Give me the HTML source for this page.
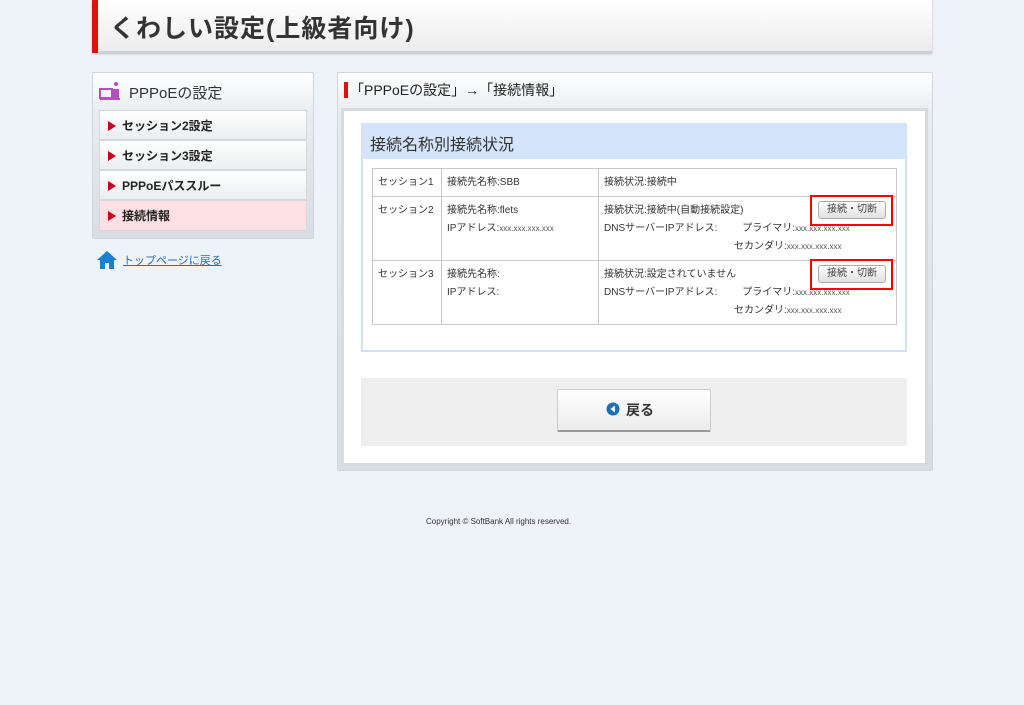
<!DOCTYPE html>
<html><head><meta charset="utf-8"><style>
*{margin:0;padding:0;box-sizing:border-box}
body{width:1024px;height:705px;background:#eef3fa;font-family:"Liberation Sans","Noto Sans CJK JP",sans-serif;color:#222;position:relative;overflow:hidden}
.a{position:absolute}
.hdr{left:92px;top:0;width:840px;height:53px;background:linear-gradient(#fff,#ececec);border-bottom:2px solid #cfd3d8;box-shadow:0 1px 2px #bbb}
.hdr:before{content:"";position:absolute;left:0;top:0;width:6px;height:53px;background:#e0100f}
.hdr span{position:absolute;left:18px;top:9px;font-size:25px;font-weight:bold;color:#333;letter-spacing:1px}
.panel{background:linear-gradient(#fff,#e9ecef 40px,#d7dde3);border:1px solid #d0d5da;border-radius:2px}
.mi{left:99px;width:208px;height:30px;background:linear-gradient(#fff,#eceeef);border:1px solid #d6d9dc;font-size:12px;font-weight:bold;padding:6px 0 0 22px}
.mi:before{content:"";position:absolute;left:8px;top:10px;border-left:8px solid #c8001a;border-top:5px solid transparent;border-bottom:5px solid transparent}
table{table-layout:fixed}
td{border:1px solid #c8c8c8;font-size:10px;vertical-align:top;padding:5px 5px 0;line-height:18px;color:#333;white-space:nowrap;overflow:hidden}
.btn{width:68px;height:18px;border:1px solid #aaa;border-radius:3px;background:linear-gradient(#fff,#e0e0e0);font-size:10px;text-align:center;line-height:16px;color:#444}
.red{border:2px solid #ff0000;width:83px;height:31px}
.x{font-size:8px;color:#555}
</style></head><body>
<div class="a hdr"><span>くわしい設定(上級者向け)</span></div>

<div class="a panel" style="left:92px;top:72px;width:222px;height:167px"></div>
<svg class="a" style="left:99px;top:81px" width="28" height="20"><rect x="1" y="8" width="12" height="9" fill="none" stroke="#b44fc0" stroke-width="2"/><rect x="14" y="8" width="6" height="10" fill="#b44fc0"/><circle cx="17" cy="3" r="2" fill="#b44fc0"/><rect x="1" y="17" width="20" height="2" fill="#b44fc0"/></svg>
<div class="a" style="left:129px;top:82px;font-size:15px;color:#333">PPPoEの設定</div>
<div class="a mi" style="top:110px">セッション2設定</div>
<div class="a mi" style="top:140px">セッション3設定</div>
<div class="a mi" style="top:170px">PPPoEパススルー</div>
<div class="a mi" style="top:200px;background:#fde0e3;height:31px">接続情報</div>
<svg class="a" style="left:96px;top:250px" width="22" height="20"><path d="M11 1 L1 10 L4 10 L4 19 L9 19 L9 13 L13 13 L13 19 L18 19 L18 10 L21 10 Z" fill="#1a7fd0"/></svg>
<div class="a" style="left:123px;top:252px;font-size:11px;color:#2a6fb0;text-decoration:underline">トップページに戻る</div>

<div class="a panel" style="left:337px;top:72px;width:596px;height:399px"></div>
<div class="a" style="left:344px;top:82px;width:4px;height:16px;background:#e0100f"></div>
<div class="a" style="left:350px;top:80px;font-size:14px;color:#222">「PPPoEの設定」→「接続情報」</div>
<div class="a" style="left:341px;top:108px;width:587px;height:358px;background:#fff;border:3px solid #d6dbe0"></div>
<div class="a" style="left:361px;top:123px;width:546px;height:229px;background:#fff;border:2px solid #d0e2f6;border-top:none"></div>
<div class="a" style="left:361px;top:123px;width:546px;height:36px;background:#d4e5fb"></div>
<div class="a" style="left:370px;top:131px;font-size:16px;color:#333">接続名称別接続状況</div>
<table class="a" style="left:372px;top:168px;width:525px;border-collapse:collapse">
<tr><td style="width:69px;height:28px">セッション1</td><td style="width:157px">接続先名称:SBB</td><td>接続状況:接続中</td></tr>
<tr><td style="height:64px">セッション2</td><td>接続先名称:flets<br>IPアドレス:<span class="x">xxx.xxx.xxx.xxx</span></td><td>接続状況:接続中(自動接続設定)<br>DNSサーバーIPアドレス:&nbsp;&nbsp;&nbsp;&nbsp;&nbsp;&nbsp;&nbsp;&nbsp;&nbsp;プライマリ:<span class="x">xxx.xxx.xxx.xxx</span><br><span style="padding-left:130px">セカンダリ:<span class="x">xxx.xxx.xxx.xxx</span></span></td></tr>
<tr><td style="height:64px">セッション3</td><td>接続先名称:<br>IPアドレス:</td><td>接続状況:設定されていません<br>DNSサーバーIPアドレス:&nbsp;&nbsp;&nbsp;&nbsp;&nbsp;&nbsp;&nbsp;&nbsp;&nbsp;プライマリ:<span class="x">xxx.xxx.xxx.xxx</span><br><span style="padding-left:130px">セカンダリ:<span class="x">xxx.xxx.xxx.xxx</span></span></td></tr>
</table>
<div class="a btn" style="left:818px;top:201px">接続・切断</div>
<div class="a red" style="left:810px;top:195px"></div>
<div class="a btn" style="left:818px;top:265px">接続・切断</div>
<div class="a red" style="left:810px;top:259px"></div>

<div class="a" style="left:361px;top:378px;width:546px;height:68px;background:#efefef"></div>
<div class="a" style="left:557px;top:389px;width:154px;height:43px;background:linear-gradient(#fff,#ececec);border:1px solid #ccc;border-bottom:2px solid #999;border-radius:2px"></div>
<svg class="a" style="left:606px;top:402px" width="14" height="14"><circle cx="7" cy="7" r="6.5" fill="#1f6fb3"/><path d="M9 3.5 L4.5 7 L9 10.5 Z" fill="#fff"/></svg>
<div class="a" style="left:626px;top:400px;font-size:14px;font-weight:bold;color:#333">戻る</div>
<div class="a" style="left:426px;top:517px;font-size:8px;color:#333">Copyright © SoftBank All rights reserved.</div>
</body></html>
